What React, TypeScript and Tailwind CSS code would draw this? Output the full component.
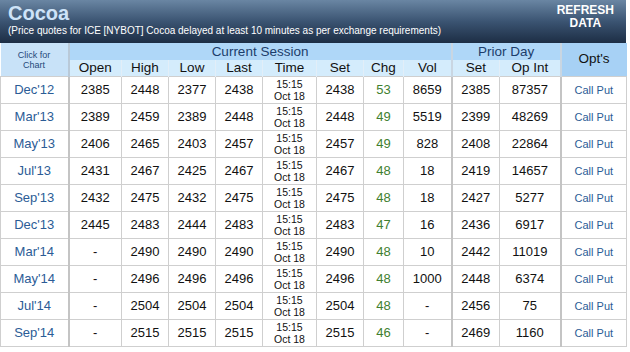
const rows = [
  { m: "Dec'12", open: "2385", high: "2448", low: "2377", last: "2438", set: "2438", chg: "53", vol: "8659", pset: "2385", oi: "87357" },
  { m: "Mar'13", open: "2389", high: "2459", low: "2389", last: "2448", set: "2448", chg: "49", vol: "5519", pset: "2399", oi: "48269" },
  { m: "May'13", open: "2406", high: "2465", low: "2403", last: "2457", set: "2457", chg: "49", vol: "828", pset: "2408", oi: "22864" },
  { m: "Jul'13", open: "2431", high: "2467", low: "2425", last: "2467", set: "2467", chg: "48", vol: "18", pset: "2419", oi: "14657" },
  { m: "Sep'13", open: "2432", high: "2475", low: "2432", last: "2475", set: "2475", chg: "48", vol: "18", pset: "2427", oi: "5277" },
  { m: "Dec'13", open: "2445", high: "2483", low: "2444", last: "2483", set: "2483", chg: "47", vol: "16", pset: "2436", oi: "6917" },
  { m: "Mar'14", open: "-", high: "2490", low: "2490", last: "2490", set: "2490", chg: "48", vol: "10", pset: "2442", oi: "11019" },
  { m: "May'14", open: "-", high: "2496", low: "2496", last: "2496", set: "2496", chg: "48", vol: "1000", pset: "2448", oi: "6374" },
  { m: "Jul'14", open: "-", high: "2504", low: "2504", last: "2504", set: "2504", chg: "48", vol: "-", pset: "2456", oi: "75" },
  { m: "Sep'14", open: "-", high: "2515", low: "2515", last: "2515", set: "2515", chg: "46", vol: "-", pset: "2469", oi: "1160" },
];

const cols = ["Open", "High", "Low", "Last", "Time", "Set", "Chg", "Vol"];

export default function App() {
  const td = "border border-[#cfcfcf] text-center p-0";
  const num = `${td} text-[13px] text-[#111]`;
  return (
    <div className="w-[630px] h-[352px] bg-white font-['Liberation_Sans',Arial,sans-serif]">
      {/* Title bar */}
      <div className="w-[626px] h-[43px] bg-gradient-to-b from-[#6a86a3] via-[#3b5472] to-[#1d2e45] flex justify-between pl-[8px] pr-[12px]">
        <div>
          <div className="text-[20px] font-bold leading-[24px] pt-[1px] text-[#cde3f8]">Cocoa</div>
          <div className="text-[10px] leading-[12px] text-white">
            (Price quotes for ICE [NYBOT] Cocoa delayed at least 10 minutes as per exchange requirements)
          </div>
        </div>
        <div className="text-[12px] font-bold leading-[13px] text-white text-center pt-[4px]">
          REFRESH
          <br />
          DATA
        </div>
      </div>

      <table className="w-[626px] border-collapse table-fixed">
        <colgroup>
          <col className="w-[68px]" />
          <col className="w-[53px]" />
          <col className="w-[47px]" />
          <col className="w-[47px]" />
          <col className="w-[47px]" />
          <col className="w-[54px]" />
          <col className="w-[47px]" />
          <col className="w-[40px]" />
          <col className="w-[48px]" />
          <col className="w-[48px]" />
          <col className="w-[61px]" />
          <col className="w-[66px]" />
        </colgroup>
        <thead>
          <tr className="h-[17px]">
            <th rowSpan={2} className="bg-[#c8e2f8] border-r-2 border-[#b9c9d8] p-0 text-[9px] leading-[10px] font-normal text-[#26497a]">
              Click for
              <br />
              Chart
            </th>
            <th colSpan={8} className="bg-[#afd7f8] p-0 text-[13.5px] leading-[16px] font-normal text-[#1c3d6b]">
              Current Session
            </th>
            <th colSpan={2} className="bg-[#afd7f8] border-l-2 border-[#c9d6e2] p-0 text-[13.5px] leading-[16px] font-normal text-[#1c3d6b]">
              Prior Day
            </th>
            <th rowSpan={2} className="bg-[#a7d1f5] border-l-2 border-[#c9d6e2] p-0 text-[13.5px] font-normal text-[#111]">
              Opt's
            </th>
          </tr>
          <tr className="h-[16px] bg-[#d4ecfc]">
            {cols.map((c) => (
              <th key={c} className="p-0 text-[13.5px] leading-[16px] font-normal text-[#111] border-x border-[#e2eef8]">
                {c}
              </th>
            ))}
            <th className="p-0 text-[13.5px] leading-[16px] font-normal text-[#111] border-l-2 border-[#c9d6e2]">Set</th>
            <th className="p-0 text-[13.5px] leading-[16px] font-normal text-[#111] border-x border-[#e2eef8]">Op Int</th>
          </tr>
        </thead>
        <tbody>
          {rows.map((r) => (
            <tr key={r.m} className="h-[27px]">
              <td className={`${td} border-r-2 border-r-[#c4c4c4] text-[13px] text-[#2b5c96]`}>{r.m}</td>
              <td className={num}>{r.open}</td>
              <td className={num}>{r.high}</td>
              <td className={num}>{r.low}</td>
              <td className={num}>{r.last}</td>
              <td className={`${td} text-[10.5px] leading-[12px] text-[#111]`}>
                15:15
                <br />
                Oct 18
              </td>
              <td className={num}>{r.set}</td>
              <td className={`${td} text-[13px] text-[#3f7f2f]`}>{r.chg}</td>
              <td className={num}>{r.vol}</td>
              <td className={`${num} border-l-2 border-l-[#c4c4c4]`}>{r.pset}</td>
              <td className={num}>{r.oi}</td>
              <td className={`${td} border-l-2 border-l-[#c4c4c4] text-[11px] text-[#2b5c96]`}>Call Put</td>
            </tr>
          ))}
        </tbody>
      </table>
    </div>
  );
}
